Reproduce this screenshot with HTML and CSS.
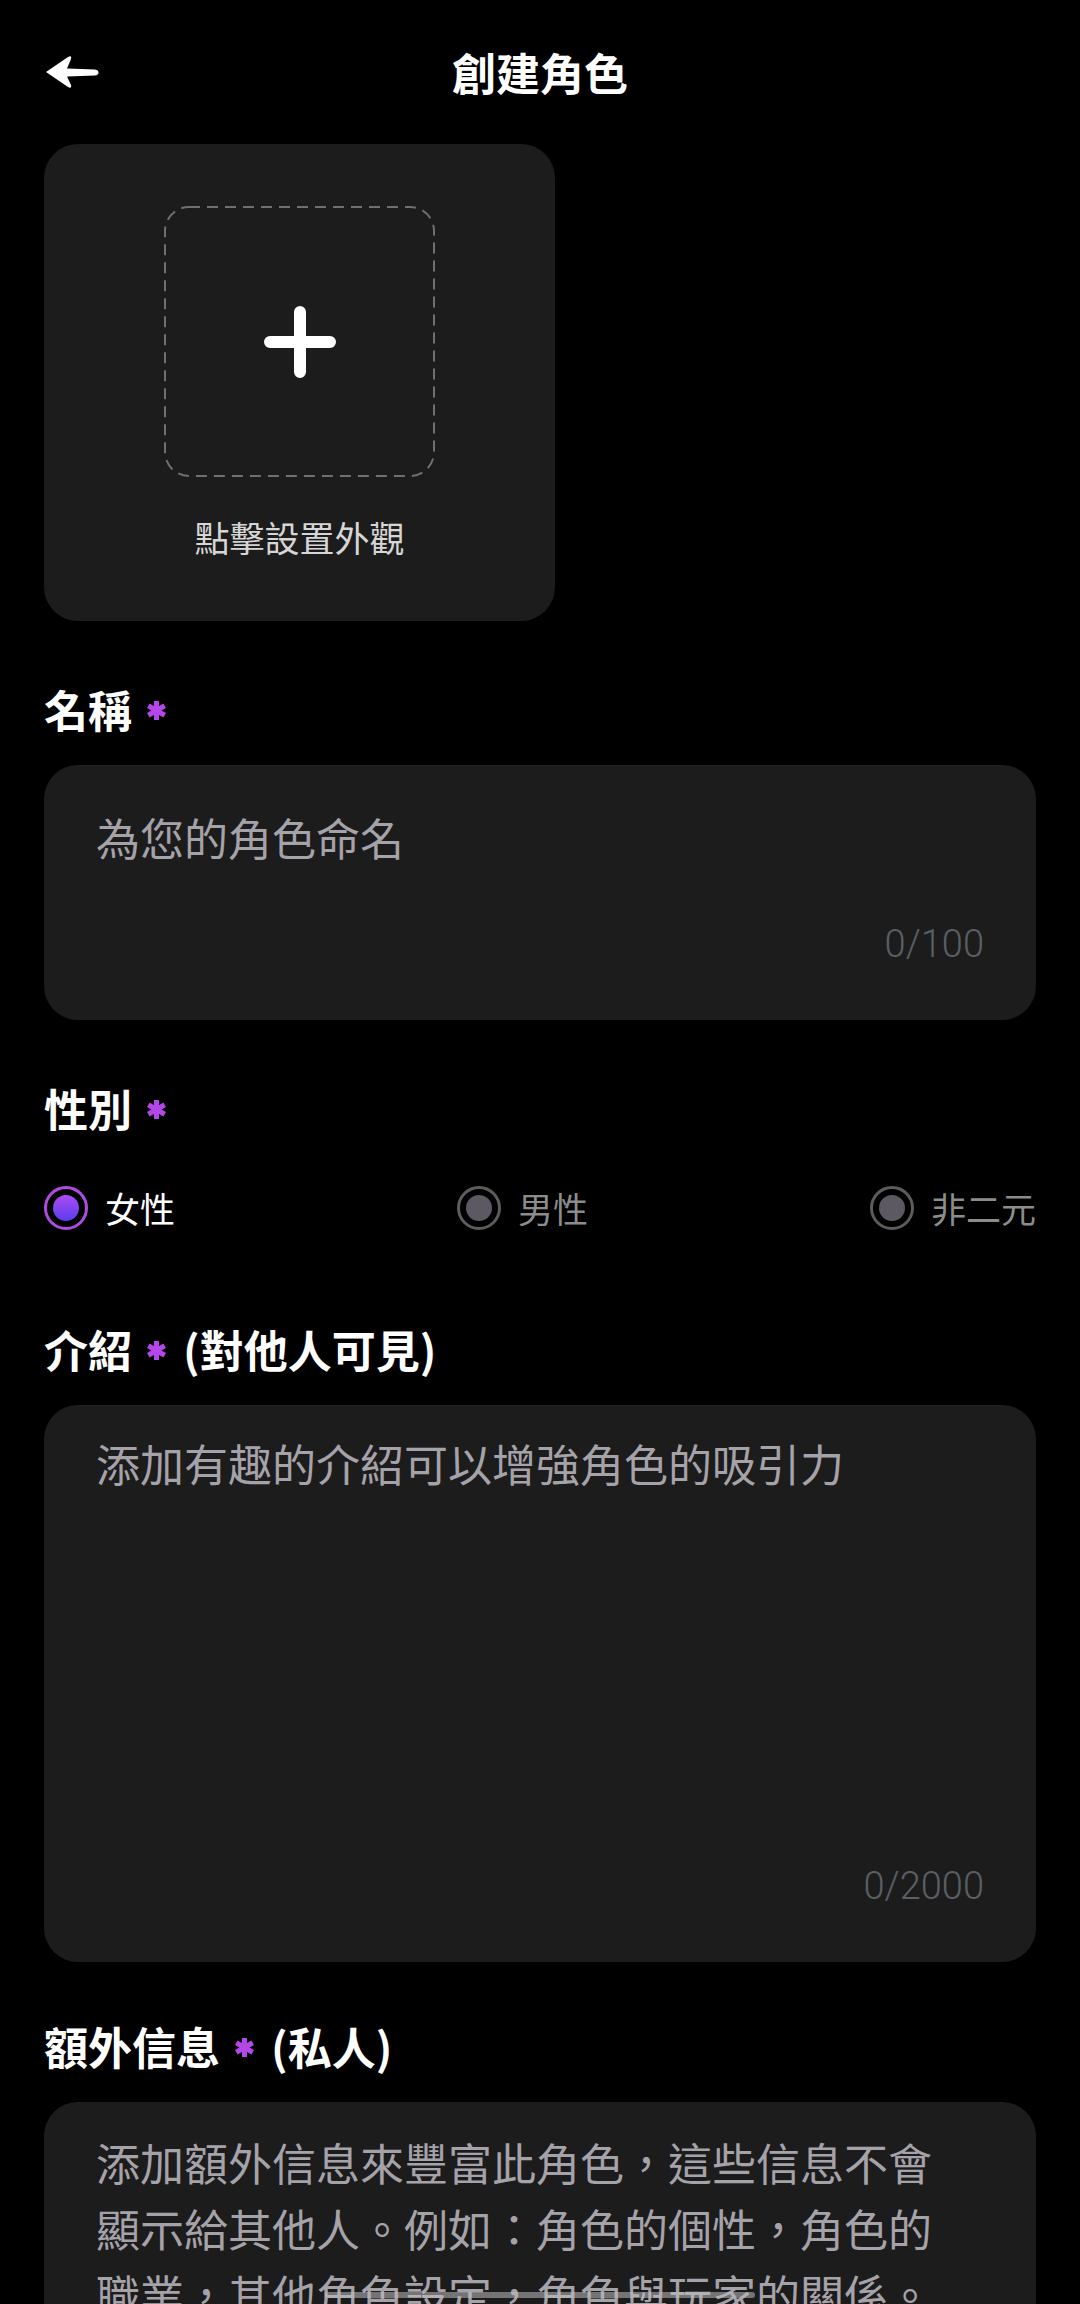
FILE: index.html
```html
<!DOCTYPE html>
<html lang="zh-Hant">
<head>
    <meta charset="UTF-8">
    <meta name="viewport" content="width=device-width, initial-scale=1.0">
    <title>創建角色</title>
    <link rel="stylesheet" href="styles.css">
</head>
<body>
    <div class="screen">
        <header class="topbar">
            <button class="back" aria-label="返回">
                <svg width="56" height="34" viewBox="0 0 56 34">
                    <path d="M2 17 L24 2 Q28 0 27 4 L23 13.5 L51 14.5 Q54.5 15 54.5 17.5 Q54.5 20 51 20.5 L23 21.5 L27 30 Q28 34 24 32 Z" fill="#fff"/>
                </svg>
            </button>
            <h1>創建角色</h1>
            <span></span>
        </header>

        <main class="form">
            <div class="avatar-card">
                <div class="avatar-drop">
                    <svg width="271" height="271" viewBox="0 0 271 271">
                        <rect x="1" y="1" width="269" height="269" rx="24" fill="none" stroke="#707070" stroke-width="2" stroke-dasharray="11 7"/>
                        <path d="M136 106 V166 M106 136 H166" stroke="#fff" stroke-width="12" stroke-linecap="round"/>
                    </svg>
                </div>
                <p>點擊設置外觀</p>
            </div>

            <!-- name -->
            <section class="field">
                <h2 class="field-label">名稱
                    <svg class="req" width="21" height="21" viewBox="0 0 20 20"><path d="M10 1 V19 M2.2 5.5 L17.8 14.5 M2.2 14.5 L17.8 5.5"/></svg>
                </h2>
                <div class="input input-name">
                    <span class="placeholder">為您的角色命名</span>
                    <span class="count">0/100</span>
                </div>
            </section>

            <!-- gender -->
            <section class="field">
                <h2 class="field-label">性別
                    <svg class="req" width="21" height="21" viewBox="0 0 20 20"><path d="M10 1 V19 M2.2 5.5 L17.8 14.5 M2.2 14.5 L17.8 5.5"/></svg>
                </h2>
                <div class="radios">
                    <label class="radio-item checked"><span class="radio"></span>女性</label>
                    <label class="radio-item"><span class="radio"></span>男性</label>
                    <label class="radio-item"><span class="radio"></span>非二元</label>
                </div>
            </section>

            <!-- intro -->
            <section class="field field-intro">
                <h2 class="field-label">介紹
                    <svg class="req" width="21" height="21" viewBox="0 0 20 20"><path d="M10 1 V19 M2.2 5.5 L17.8 14.5 M2.2 14.5 L17.8 5.5"/></svg>
                    <span>(對他人可見)</span>
                </h2>
                <div class="input input-long">
                    <span class="placeholder">添加有趣的介紹可以增強角色的吸引力</span>
                    <span class="count">0/2000</span>
                </div>
            </section>

            <!-- extra info -->
            <section class="field field-extra">
                <h2 class="field-label">額外信息
                    <svg class="req" width="21" height="21" viewBox="0 0 20 20"><path d="M10 1 V19 M2.2 5.5 L17.8 14.5 M2.2 14.5 L17.8 5.5"/></svg>
                    <span>(私人)</span>
                </h2>
                <div class="input input-long input-extra">
                    <span class="placeholder">添加額外信息來豐富此角色，這些信息不會顯示給其他人。例如：角色的個性，角色的職業，其他角色設定，角色與玩家的關係。</span>
                    <span class="count">0/2000</span>
                </div>
            </section>
        </main>
    </div>

    <div class="home-indicator"></div>
</body>
</html>
```

FILE: styles.css
```css
html, body {
    margin: 0;
    background-color: #000;
}
body {
    font-family: "Noto Sans CJK SC", "Noto Sans CJK TC", sans-serif;
    color: #fff;
}
.screen {
    height: 100vh;
    overflow: hidden;
    padding: 0 44px;
}
.topbar {
    height: 144px;
    display: grid;
    grid-template-columns: 1fr auto 1fr;
    align-items: center;
}
.back {
    justify-self: start;
    background: none;
    border: none;
    padding: 0;
    display: flex;
    cursor: pointer;
}
.topbar h1 {
    margin: 0;
    font-size: 44px;
    font-weight: 700;
    line-height: 60px;
}
.avatar-card {
    width: 511px;
    box-sizing: border-box;
    padding: 62px 0 60px;
    background-color: #1c1c1c;
    border-radius: 34px;
    display: flex;
    flex-direction: column;
    align-items: center;
    gap: 36px;
}
.avatar-drop {
    width: 271px;
    height: 271px;
    display: flex;
}
.avatar-card p {
    margin: 0;
    font-size: 35px;
    line-height: 48px;
    color: #d6d6d6;
}
.field {
    margin-top: 58px;
}
.field-intro {
    margin-top: 89px;
}
.field-extra {
    margin-top: 54px;
}
.field-label {
    margin: 0 0 26px;
    font-size: 44px;
    font-weight: 700;
    line-height: 60px;
    display: flex;
    align-items: center;
    gap: 14px;
}
.field-label span {
    margin-left: 2px;
}
.req {
    fill: none;
    stroke: #b347e8;
    stroke-width: 4.8;
    margin-top: 2px;
}
.input {
    box-sizing: border-box;
    background-color: #1c1c1c;
    border-radius: 34px;
    padding: 39px 52px 51px;
    display: flex;
    flex-direction: column;
}
.input-name {
    height: 255px;
}
.input-long {
    height: 557px;
    padding-top: 25px;
}
.input-extra {
    padding-top: 27px;
    padding-right: 80px;
}
.placeholder {
    font-size: 44px;
    line-height: 66px;
    color: #a6a2aa;
}
.count {
    margin-top: auto;
    align-self: flex-end;
    font-family: Roboto, "Noto Sans", sans-serif;
    font-weight: 300;
    font-size: 38px;
    line-height: 50px;
    color: #5a5f64;
}
.input-extra .count {
    margin-right: -28px;
}
/* label margin collapses with this one, so 48 is the real gap */
.radios {
    margin-top: 48px;
    display: flex;
    justify-content: space-between;
}
.radio-item {
    display: flex;
    align-items: center;
    gap: 17px;
    font-size: 35px;
    line-height: 44px;
    color: #8c8c8c;
}
.radio {
    width: 44px;
    height: 44px;
    box-sizing: border-box;
    border: 3px solid #5c5c5c;
    border-radius: 50%;
    display: grid;
    place-items: center;
}
.radio::after {
    content: "";
    width: 26px;
    height: 26px;
    border-radius: 50%;
    background-color: #5d5962;
}
.radio-item.checked {
    color: #fff;
}
.radio-item.checked .radio {
    border-color: #b04ae0;
}
.radio-item.checked .radio::after {
    background: linear-gradient(180deg, #ab4cf3, #5a3cee);
}
.home-indicator {
    position: fixed;
    left: 50%;
    bottom: 6px;
    width: 430px;
    height: 6px;
    margin-left: -215px;
    border-radius: 3px;
    background-color: rgba(190, 190, 190, 0.55);
}
```
